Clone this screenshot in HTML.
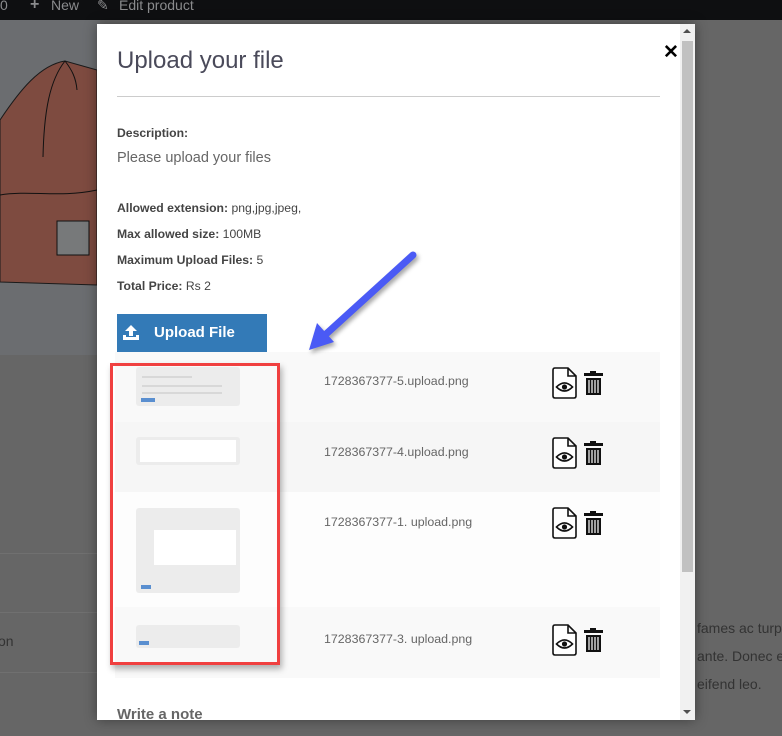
<!DOCTYPE html>
<html><head><meta charset="utf-8"><style>
*{margin:0;padding:0;box-sizing:border-box}
body{width:782px;height:736px;overflow:hidden;background:#666;font-family:"Liberation Sans",sans-serif;position:relative}
.abs{position:absolute}
.top{left:0;top:0;width:782px;height:20px;background:#0e0f11;color:#8a8b8d;font-size:14px}
.modal{left:97px;top:24px;width:598px;height:696px;background:#fff;box-shadow:0 0 12px rgba(0,0,0,.4);overflow:hidden}
.lbl{color:#444;font-size:12.2px;position:absolute;left:20px;white-space:nowrap}
.lbl b{font-weight:bold}
.row{position:absolute;left:18px;width:545px}
.fn{position:absolute;left:227px;font-size:12.4px;color:#666}
.th{position:absolute;left:39px;width:104px;background:#ececec;border-radius:3px}
.ln{position:absolute;height:2px;background:#d8d8d8}
</style></head><body>
<div class="abs top"><span class="abs" style="left:0;top:-3px">0</span><span class="abs" style="left:30px;top:-4px;font-size:16px;font-weight:bold">+</span><span class="abs" style="left:51px;top:-3px">New</span><span class="abs" style="left:97px;top:-3px">✎</span><span class="abs" style="left:119px;top:-3px">Edit product</span></div>
<div class="abs" style="left:0;top:20px;width:100px;height:335px;background:#6b6d70"></div>
<svg class="abs" style="left:0;top:20px" width="100" height="275"><path d="M0,100 C20,70 40,45 65,41 L97,50 L97,265 L0,262 Z" fill="#7e4b40" stroke="#1a1a1a" stroke-width="1"/><path d="M65,41 C50,60 44,90 43,137 M65,41 C72,50 76,58 77,70" fill="none" stroke="#111" stroke-width="1"/><path d="M0,175 C30,170 60,178 97,170" fill="none" stroke="#111" stroke-width="1"/><rect x="57" y="201" width="32" height="34" fill="#77797a" stroke="#111"/></svg>
<div class="abs" style="left:0;top:553px;width:100px;height:1px;background:#707070"></div>
<div class="abs" style="left:0;top:612px;width:100px;height:1px;background:#707070"></div>
<div class="abs" style="left:0;top:672px;width:100px;height:1px;background:#707070"></div>
<div class="abs" style="left:-2px;top:633px;color:#333;font-size:14px">on</div>
<div class="abs" style="left:697px;top:614px;color:#333;font-size:14px;line-height:28px;white-space:nowrap">fames ac turp<br>ante. Donec e<br>eifend leo.</div>
<div class="abs modal">
<div class="abs" style="left:20px;top:23px;font-size:24px;color:#4a4a5a;font-weight:300">Upload your file</div>
<div class="abs" style="left:20px;top:72px;width:543px;height:1px;background:#ccc"></div>
<div class="abs" style="left:566px;top:17px;font-size:19px;color:#000;font-weight:bold">✕</div>
<div class="lbl" style="top:102px"><b>Description:</b></div>
<div class="lbl" style="top:126px;font-size:14.5px;color:#666">Please upload your files</div>
<div class="lbl" style="top:177px"><b>Allowed extension:</b> png,jpg,jpeg,</div>
<div class="lbl" style="top:203px"><b>Max allowed size:</b> 100MB</div>
<div class="lbl" style="top:229px"><b>Maximum Upload Files:</b> 5</div>
<div class="lbl" style="top:255px"><b>Total Price:</b> Rs 2</div>
<div class="abs" style="left:20px;top:290px;width:150px;height:38px;background:#337ab7;color:#fff;font-weight:bold;font-size:15px;line-height:38px;padding-left:37px">Upload File
<svg class="abs" style="left:5px;top:10px" width="18" height="17"><path d="M9 1 L15 7 H11 V12 H7 V7 H3 Z M1 11 V16 H17 V11 H14 V13 H4 V11 Z" fill="#fff"/></svg></div>
<div class="row" style="top:328px;height:70px;background:#f9f9f9"></div>
<div class="row" style="top:398px;height:70px;background:#f6f6f6"></div>
<div class="row" style="top:468px;height:115px;background:#fdfdfd"></div>
<div class="row" style="top:583px;height:71px;background:#f9f9f9"></div>
<div class="th" style="top:343px;height:39px"><div class="ln" style="left:6px;top:9px;width:50px"></div><div class="ln" style="left:6px;top:18px;width:80px"></div><div class="ln" style="left:6px;top:25px;width:80px"></div><div class="abs" style="left:5px;top:31px;width:14px;height:4px;background:#5a8fd0"></div></div>
<div class="th" style="top:413px;height:28px"><div class="abs" style="left:4px;top:3px;width:96px;height:22px;background:#fff"></div></div>
<div class="th" style="top:484px;height:85px"><div class="abs" style="left:18px;top:22px;width:82px;height:35px;background:#fff"></div><div class="abs" style="left:5px;top:77px;width:10px;height:4px;background:#5a8fd0"></div></div>
<div class="th" style="top:601px;height:23px"><div class="abs" style="left:3px;top:16px;width:10px;height:4px;background:#5a8fd0"></div></div>
<div class="abs" style="left:13px;top:339px;width:170px;height:302px;border:3px solid #f04040;box-shadow:2px 4px 6px rgba(0,0,0,.3)"></div>
<div class="fn" style="top:350px">1728367377-5.upload.png</div>
<div class="fn" style="top:421px">1728367377-4.upload.png</div>
<div class="fn" style="top:491px">1728367377-1. upload.png</div>
<div class="fn" style="top:608px">1728367377-3. upload.png</div>
<div class="abs" style="left:20px;top:682px;font-size:15px;font-weight:bold;color:#666">Write a note</div>
<div class="abs" style="left:583px;top:0;width:15px;height:696px;background:#f1f1f1"><div class="abs" style="left:2px;top:17px;width:11px;height:531px;background:#c1c1c1"></div><div class="abs" style="left:3px;top:5px;border:4px solid transparent;border-bottom:4px solid #505050;border-top:0"></div><div class="abs" style="left:3px;top:686px;border:4px solid transparent;border-top:4px solid #505050;border-bottom:0"></div></div>
</div>
<svg class="abs" style="left:0;top:0" width="782" height="736">
<defs><g id="ic"><path d="M1 2 Q1 0 3 0 H16 L24 8 V28 Q24 30 22 30 H3 Q1 30 1 28 Z M16 0 V8 H24" fill="#fff" stroke="#111" stroke-width="1.6"/><path d="M4.5 19 Q12.5 11 20.5 19 Q12.5 27 4.5 19 Z" fill="none" stroke="#111" stroke-width="1.6"/><circle cx="12.5" cy="19" r="2.6" fill="#111"/><g transform="translate(32,3)"><rect x="6" y="0" width="6" height="2" fill="#111"/><rect x="0" y="2" width="19" height="3" fill="#111"/><path d="M2 7 H17 V24 H2 Z" fill="#111"/><path d="M5 9 V22 M8 9 V22 M11 9 V22 M14 9 V22" stroke="#fff" stroke-width="1.2"/></g></g></defs>
<use href="#ic" x="552" y="368"/><use href="#ic" x="552" y="438"/><use href="#ic" x="552" y="508"/><use href="#ic" x="552" y="625"/>
<g style="filter:drop-shadow(2px 3px 2px rgba(0,0,0,.35))"><line x1="413" y1="255" x2="325" y2="335" stroke="#4a5af5" stroke-width="7" stroke-linecap="round"/><polygon points="309,350 317,323 334,342" fill="#4a5af5"/></g>
</svg>
</body></html>
